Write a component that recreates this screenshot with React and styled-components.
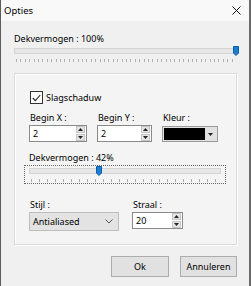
import React from 'react'
import styled, { createGlobalStyle } from 'styled-components'

const Global = createGlobalStyle`
    html, body {
        margin: 0;
        padding: 0;
        background: #f0f0f0;
    }
    body {
        font-family: "Noto Sans", "Open Sans", sans-serif;
        font-size: 9px;
        color: #000;
    }
`

function Thumb() {
    return (
        <svg width="6" height="10" viewBox="0 0 6 10">
            <path d="M0.5 0.5 H5.5 V7 L3 9.5 L0.5 7 Z" fill="#1a7fd4" stroke="#0a5ca8" strokeWidth="1" />
        </svg>
    )
}

function Slider({ at, ticks, boxed }) {
    return (
        <SliderWrap boxed={boxed}>
            <Track>
                <ThumbHolder style={{ left: at }}>
                    <Thumb />
                </ThumbHolder>
            </Track>
            <Ticks ticks={ticks} />
        </SliderWrap>
    )
}

function Spinner() {
    return (
        <SpinBox>
            <SpinBtn>
                <svg width="5" height="3" viewBox="0 0 5 3"><path d="M0 3 L2.5 0 L5 3 Z" fill="#222" /></svg>
            </SpinBtn>
            <SpinBtn>
                <svg width="5" height="3" viewBox="0 0 5 3"><path d="M0 0 L2.5 3 L5 0 Z" fill="#222" /></svg>
            </SpinBtn>
        </SpinBox>
    )
}

function App() {
    return (
        <>
            <Global />
            <Window>
                <TitleBar>
                    <span>Opties</span>
                    <svg width="9" height="9" viewBox="0 0 9 9">
                        <path d="M0.5 0.5 L8.5 8.5 M8.5 0.5 L0.5 8.5" stroke="#111" strokeWidth="1" />
                    </svg>
                </TitleBar>
                <Body>
                    <Label>Dekvermogen : 100%</Label>
                    <Slider at={218} ticks={4.4} />
                    <Panel>
                        <Check>
                            <CheckBox>
                                <svg width="9" height="8" viewBox="0 0 9 8">
                                    <path d="M0.8 4 L3.3 6.6 L8.3 1" stroke="#222" strokeWidth="1.1" fill="none" />
                                </svg>
                            </CheckBox>
                            Slagschaduw
                        </Check>
                        <Row gap={10} top={8}>
                            <Field width={58}>
                                <Label>Begin X :</Label>
                                <Input>
                                    <span>2</span>
                                    <Spinner />
                                </Input>
                            </Field>
                            <Field width={55}>
                                <Label>Begin Y :</Label>
                                <Input>
                                    <span>2</span>
                                    <Spinner />
                                </Input>
                            </Field>
                            <Field width={56}>
                                <Label>Kleur :</Label>
                                <ColorPick>
                                    <Swatch />
                                    <DropBtn>
                                        <svg width="5" height="3" viewBox="0 0 5 3"><path d="M0 0 L2.5 3 L5 0 Z" fill="#222" /></svg>
                                    </DropBtn>
                                </ColorPick>
                            </Field>
                        </Row>
                        <Label style={{ marginTop: 10 }}>Dekvermogen : 42%</Label>
                        <Slider at={66} ticks={8} boxed />
                        <Row gap={13} top={15}>
                            <Field width={90}>
                                <Label>Stijl :</Label>
                                <Select>
                                    <span>Antialiased</span>
                                    <svg width="8" height="5" viewBox="0 0 8 5">
                                        <path d="M0.5 0.5 L4 4 L7.5 0.5" stroke="#555" fill="none" />
                                    </svg>
                                </Select>
                            </Field>
                            <Field width={51}>
                                <Label>Straal :</Label>
                                <Input>
                                    <span>20</span>
                                    <Spinner />
                                </Input>
                            </Field>
                        </Row>
                    </Panel>
                    <Buttons>
                        <Button width={58}>Ok</Button>
                        <Button width={57}>Annuleren</Button>
                    </Buttons>
                </Body>
            </Window>
        </>
    )
}

export default App

const Window = styled.div`
    width: 251px;
    height: 286px;
    box-sizing: border-box;
    display: flex;
    flex-direction: column;
    border-left: 1px solid #5c5c5c;
    border-right: 2px solid #6a6a6a;
    background: #f0f0f0;
`

const TitleBar = styled.div`
    height: 21px;
    flex: none;
    box-sizing: border-box;
    background: #f9f9f9;
    display: flex;
    align-items: center;
    justify-content: space-between;
    padding: 0 8px 1px 3px;
    font-size: 9.5px;
`

const Body = styled.div`
    flex: 1;
    display: flex;
    flex-direction: column;
    padding: 12px 12px 0 13px;
`

const Label = styled.div`
    line-height: 12px;
    height: 12px;
    white-space: nowrap;
`

const SliderWrap = styled.div`
    display: flex;
    flex-direction: column;
    box-sizing: border-box;
    padding: ${p => p.boxed ? '2px 4px 1px 4px' : '0'};
    margin: ${p => p.boxed ? '1px 0 0 -5px' : '3px 0 0 0'};
    width: ${p => p.boxed ? '202px' : 'auto'};
    border: ${p => p.boxed ? '1px dotted #666' : 'none'};
`

const Track = styled.div`
    position: relative;
    height: 4px;
    background: #e7e7e7;
    border: 1px solid #d4d4d4;
`

const ThumbHolder = styled.div`
    position: absolute;
    top: -3px;
    display: flex;
`

const Ticks = styled.div`
    height: 3px;
    margin: 5px 2px 0 2px;
    background: repeating-linear-gradient(
        to right,
        #b0b0b0 0,
        #b0b0b0 1px,
        transparent 1px,
        transparent ${p => p.ticks}px
    );
`

const Panel = styled.div`
    margin-top: 11px;
    height: 172px;
    flex: none;
    box-sizing: border-box;
    border: 1px solid #dadada;
    box-shadow: inset 1px 1px 0 #fff, 1px 1px 0 #fff;
    background: #f4f4f4;
    display: flex;
    flex-direction: column;
    padding: 17px 10px 0 14px;
`

const Check = styled.div`
    display: flex;
    align-items: center;
    gap: 3px;
    height: 13px;
    padding-left: 1px;
`

const CheckBox = styled.div`
    width: 11px;
    height: 11px;
    border: 1px solid #333;
    background: #fff;
    display: flex;
    align-items: center;
    justify-content: center;
`

const Row = styled.div`
    display: flex;
    gap: ${p => p.gap}px;
    margin-top: ${p => p.top}px;
`

const Field = styled.div`
    width: ${p => p.width}px;
    display: flex;
    flex-direction: column;
    gap: 1px;

    > ${Label} {
        padding-left: 1px;
    }
`

const Input = styled.div`
    height: 17px;
    box-sizing: border-box;
    border: 1px solid #8a8a8a;
    background: #fff;
    display: flex;
    align-items: center;
    justify-content: space-between;
    padding: 0 0 0 3px;
`

const SpinBox = styled.div`
    display: flex;
    flex-direction: column;
    height: 15px;
    width: 9px;
    margin-right: 1px;
    gap: 1px;
`

const SpinBtn = styled.div`
    flex: 1;
    background: #e4e4e4;
    border: 1px solid #c6c6c6;
    box-sizing: border-box;
    display: flex;
    align-items: center;
    justify-content: center;
`

const ColorPick = styled.div`
    height: 16px;
    margin-top: 1px;
    box-sizing: border-box;
    border: 1px solid #9a9a9a;
    background: #e1e1e1;
    display: flex;
    padding: 1px;
`

const Swatch = styled.div`
    flex: 1;
    background: #000;
`

const DropBtn = styled.div`
    width: 11px;
    display: flex;
    align-items: center;
    justify-content: center;
`

const Select = styled.div`
    height: 19px;
    box-sizing: border-box;
    border: 1px solid #bdbdbd;
    background: #e3e3e3;
    display: flex;
    align-items: center;
    justify-content: space-between;
    padding: 0 5px 0 3px;
`

const Buttons = styled.div`
    display: flex;
    justify-content: flex-end;
    gap: 11px;
    margin-top: 11px;
`

const Button = styled.div`
    width: ${p => p.width}px;
    height: 21px;
    box-sizing: border-box;
    border: 1px solid #adadad;
    background: #e1e1e1;
    display: flex;
    align-items: center;
    justify-content: center;
`
